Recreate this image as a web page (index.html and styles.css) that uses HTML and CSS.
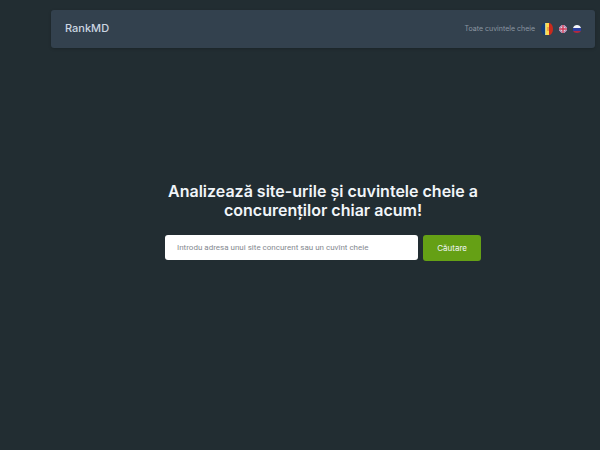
FILE: index.html
```html
<!DOCTYPE html>
<html lang="ro">
<head>
    <meta charset="UTF-8">
    <meta name="viewport" content="width=device-width, initial-scale=1.0">
    <title>RankMD</title>
    <link rel="stylesheet" href="styles.css">
</head>
<body>
    <header class="navbar">
        <a class="brand" href="#">RankMD</a>
        <nav class="menu">
            <a class="menu-link" href="#">Toate cuvintele cheie</a>
            <a class="lang" href="#" aria-label="Română">
                <svg width="12" height="12" viewBox="0 0 12 12">
                    <path d="M4 0v12H3Q0 10 0 6t3-6z" fill="#173c78"/>
                    <path d="M4 0h4v12H4z" fill="#ffd94f"/>
                    <path d="M4 0h1v12H4z" fill="#b9cf9a"/>
                    <path d="M8 0h1q3 2 3 6t-3 6H8z" fill="#c92a1d"/>
                    <path d="M6 4h2v4H6z" fill="#e8a648"/>
                </svg>
            </a>
            <a class="lang" href="#" aria-label="English">
                <svg width="8" height="8" viewBox="0 0 8 8">
                    <circle cx="4" cy="4" r="4" fill="#5a4a86"/>
                    <path d="M1 1l6 6M7 1L1 7" stroke="#c98fae" stroke-width="1"/>
                    <path d="M4 0v8M0 4h8" stroke="#f3e4ea" stroke-width="3"/>
                    <path d="M4 0v8M0 4h8" stroke="#cc3355" stroke-width="1.4"/>
                </svg>
            </a>
            <a class="lang" href="#" aria-label="Русский">
                <svg width="8" height="8" viewBox="0 0 8 8">
                    <path d="M0 3Q1 0 4 0t4 3z" fill="#f4f6fa"/>
                    <path d="M0 3h8v3H0z" fill="#2b3fa0"/>
                    <path d="M0 6h8Q7 8 4 8T0 6z" fill="#b3293f"/>
                </svg>
            </a>
        </nav>
    </header>

    <main class="hero">
        <h1 class="title">Analizează site-urile și cuvintele cheie a concurenților chiar acum!</h1>
        <form class="search">
            <input class="search-input" type="text" aria-label="Site sau cuvînt cheie" placeholder="Introdu adresa unui site concurent sau un cuvînt cheie">
            <button class="search-button" type="submit">Căutare</button>
        </form>
    </main>
</body>
</html>
```

FILE: styles.css
```css
* {
    box-sizing: border-box;
}

body {
    display: flex;
    flex-direction: column;
    min-height: 100vh;
    margin: 0;
    padding: 10px 5px 56px 51px;
    background-color: #222d32;
    color: #f1f5f9;
    font-family: Inter, "Open Sans", sans-serif;
}

a {
    color: inherit;
    text-decoration: none;
}

/* Top bar */
.navbar {
    display: flex;
    align-items: center;
    justify-content: space-between;
    padding: 8px 14px 10px;
    border-radius: 3px;
    background-color: #33414e;
    box-shadow: 0 1px 3px rgba(0, 0, 0, 0.2);
}

.brand {
    color: #cbd5e1;
    font-size: 11px;
    font-weight: 500;
    line-height: 20px;
}

.menu {
    display: flex;
    align-items: center;
    gap: 6px;
    padding-top: 2px;
}

.menu-link {
    color: #8c96a1;
    font-size: 7px;
    line-height: 12px;
}

.lang svg {
    display: block;
}

/* Search block, centered in the space under the bar */
.hero {
    display: flex;
    flex: 1;
    flex-direction: column;
    align-items: center;
    justify-content: center;
    gap: 15px;
    width: 100%;
    max-width: 316px;
    margin: 0 auto;
}

.title {
    margin: 0;
    font-size: 16px;
    font-weight: 600;
    line-height: 19px;
    text-align: center;
}

.search {
    display: flex;
    align-items: flex-start;
    gap: 5px;
    width: 100%;
}

.search-input {
    flex: 1;
    min-width: 0;
    height: 25px;
    padding: 0 12px;
    border: 0;
    border-radius: 3px;
    background-color: #fff;
    color: #334155;
    font-family: Roboto, sans-serif;
    font-size: 8px;
}

.search-input::placeholder {
    color: #858990;
}

.search-button {
    height: 26px;
    padding: 0 14px;
    border: 0;
    border-radius: 3px;
    background-color: #65a015;
    color: #f1f5f9;
    font-family: inherit;
    font-size: 8px;
}
```
